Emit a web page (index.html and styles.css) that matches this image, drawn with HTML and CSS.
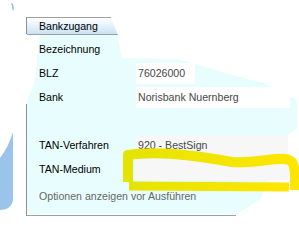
FILE: index.html
```html
<!DOCTYPE html>
<html lang="de">
<head>
    <meta charset="UTF-8">
    <title>Bankzugang</title>
    <link rel="stylesheet" href="styles.css">
</head>
<body>
    <!-- cut-out backdrop of the pasted screenshot -->
    <svg class="backdrop" width="299" height="241" viewBox="0 0 299 241">
        <polygon class="backdrop-fill" points="40,34 117,34 122,58 178,59 250,80 262,82 297,100 297,128 288,135 260,200 236,214 26,214 26,104 35,80 38,50"/>
        <path class="backdrop-blob" d="M13,132 L13,200 C12,206 8,210 0,210 L0,158 C6,150 10,142 13,132 Z"/>
        <path class="backdrop-mark" d="M11.5,3.5 C13,5 13.5,7 13,10"/>
    </svg>

    <div class="panel">
        <div class="panel-head">Bankzugang</div>
        <div class="fields">
            <div class="row">
                <span class="label">Bezeichnung</span>
                <span class="value value-plain"></span>
            </div>
            <div class="row">
                <span class="label">BLZ</span>
                <span class="value value-short">76026000</span>
            </div>
            <div class="row">
                <span class="label">Bank</span>
                <span class="value">Norisbank Nuernberg</span>
            </div>
            <div class="row"></div>
            <div class="row">
                <span class="label">TAN-Verfahren</span>
                <span class="value value-grey">920 - BestSign</span>
            </div>
            <div class="row">
                <span class="label">TAN-Medium</span>
                <span class="value value-grey"></span>
            </div>
        </div>
        <div class="options">Optionen anzeigen vor Ausführen</div>
    </div>

    <!-- highlighter scribble over the TAN-Medium field -->
    <svg class="marker" width="299" height="241" viewBox="0 0 299 241">
        <defs>
            <linearGradient id="ink" x1="0" y1="0" x2="1" y2="0">
                <stop offset="0" stop-color="#e4e400"/>
                <stop offset="1" stop-color="#ffe600"/>
            </linearGradient>
        </defs>
        <path class="marker-stroke" d="M128,182 L128,155 C160,150 200,156 232,162 C260,164 284,154 292,162 C296,168 295,180 295,190"/>
        <path class="marker-stroke marker-thin" d="M129,186 L289,187"/>
    </svg>
</body>
</html>
```

FILE: styles.css
```css
* {
    margin: 0;
    padding: 0;
    box-sizing: border-box;
}

body {
    font-family: 'Liberation Sans', Arial, sans-serif;
    font-size: 10.6px;
    background: #ffffff;
    color: #000000;
    width: 299px;
    height: 241px;
    overflow: hidden;
    position: relative;
    padding: 17px 0 0 26px;
}

.backdrop {
    position: absolute;
    top: 0;
    left: 0;
    display: block;
}

.backdrop-fill {
    fill: #e8fdfd;
}

.backdrop-blob {
    fill: #9ac4ea;
}

.backdrop-mark {
    fill: none;
    stroke: #8db7dc;
    stroke-width: 1.2;
}

.panel {
    position: relative;
    width: 272px;
    border-left: 1px solid;
    border-image: linear-gradient(to bottom, #8f8f8f 0 18px, transparent 18px 87px, #8f8f8f 87px) 1;
}

.panel-head {
    width: 91px;
    height: 18px;
    line-height: 16px;
    padding-left: 12px;
    border-top: 1px solid #a0a0a0;
    border-bottom: 1px solid #a0a0a0;
    background: linear-gradient(to bottom, #ffffff, #c9e2f6);
    clip-path: polygon(0 0, 84px 0, 100% 100%, 0 100%);
}

.fields {
    padding-top: 2px;
}

.row {
    display: grid;
    grid-template-columns: 109px 1fr;
    align-items: center;
    height: 24px;
}

.label {
    padding-left: 12px;
}

.value {
    width: 154px;
    height: 21px;
    line-height: 21px;
    padding-left: 2px;
    color: #484848;
    background: #ffffff;
}

.value-plain {
    background: transparent;
}

.value-short {
    width: 59px;
}

.value-grey {
    width: 152px;
    background: #f7f7f7;
}

.options {
    width: 209px;
    height: 32px;
    margin-top: 3px;
    padding: 0 0 5px 12px;
    line-height: 24px;
    color: #666666;
    border-bottom: 1px solid #a0a0a0;
}

.marker {
    position: absolute;
    top: 0;
    left: 0;
}

.marker-stroke {
    fill: none;
    stroke: url(#ink);
    stroke-width: 10;
    stroke-linejoin: round;
}

.marker-thin {
    stroke-width: 9;
}
```
